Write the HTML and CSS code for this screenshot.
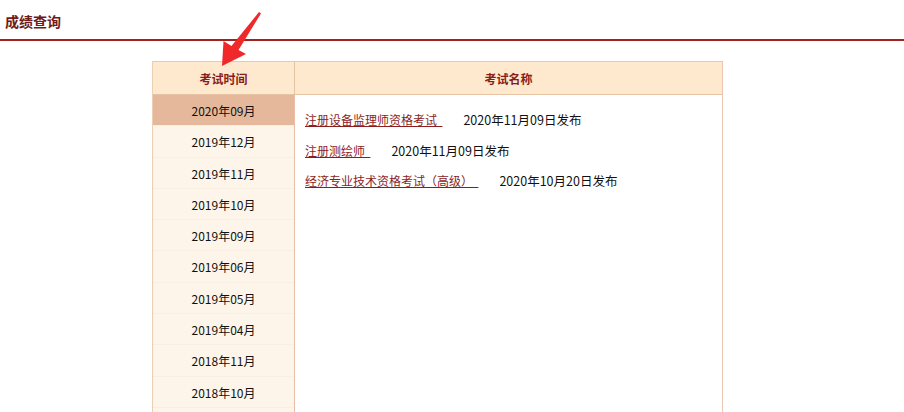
FILE: index.html
```html
<!DOCTYPE html>
<html lang="zh">
<head>
<meta charset="utf-8">
<title>成绩查询</title>
<link rel="stylesheet" href="styles.css">
</head>
<body>
<div class="topbar">
  <h1 class="title">成绩查询</h1>
</div>
<svg class="arrow" width="60" height="80" viewBox="0 0 60 80">
  <polygon points="41,7 43,8.5 20.5,45 28,49 4,61 5.5,36 13.5,41" fill="#f0282a"/>
</svg>
<div class="board">
  <div class="col-left">
    <div class="head">考试时间</div>
    <ul class="months">
      <li class="active">2020年09月</li>
      <li>2019年12月</li>
      <li>2019年11月</li>
      <li>2019年10月</li>
      <li>2019年09月</li>
      <li>2019年06月</li>
      <li>2019年05月</li>
      <li>2019年04月</li>
      <li>2018年11月</li>
      <li>2018年10月</li>
    </ul>
  </div>
  <div class="col-right">
    <div class="head">考试名称</div>
    <ul class="exams">
      <li><a href="#">注册设备监理师资格考试&nbsp;&nbsp;</a><span class="date">2020年11月09日发布</span></li>
      <li><a href="#">注册测绘师&nbsp;&nbsp;</a><span class="date">2020年11月09日发布</span></li>
      <li><a href="#">经济专业技术资格考试（高级）&nbsp;&nbsp;</a><span class="date">2020年10月20日发布</span></li>
    </ul>
  </div>
</div>
</body>
</html>
```
FILE: styles.css
```css
html, body {
  margin: 0;
  padding: 0;
  background: #ffffff;
  font-family: "Noto Sans CJK SC", "Noto Sans", sans-serif;
  font-size: 12px;
  color: #111;
  height: 412px;
  overflow: hidden;
}
.topbar {
  height: 41px;
  border-bottom: 2px solid #a3221f;
  display: flex;
  align-items: center;
  padding-left: 5px;
  box-sizing: border-box;
}
.title {
  margin: 0;
  font-size: 14px;
  font-weight: bold;
  color: #6e1a1a;
  line-height: 1;
  transform: translateY(1px);
}
.arrow {
  position: absolute;
  left: 218px;
  top: 5px;
}
.board {
  display: flex;
  margin-left: 152px;
  margin-top: 20px;
  width: 571px;
  height: 360px;
}
.head {
  height: 32px;
  background: #fee9cf;
  border-top: 1px solid #e9cba9;
  border-bottom: 1px solid #e6c3a2;
  display: flex;
  align-items: center;
  justify-content: center;
  font-weight: bold;
  color: #8a1d1a;
  font-size: 12px;
}
.col-left {
  width: 141px;
  border-left: 1px solid #ebcfb2;
  border-right: 1px solid #e9bfa7;
  background: #fdf5ea;
}
.col-left .head {
  border-right: 1px solid #e6c3a2;
  margin-right: -1px;
}
.months {
  list-style: none;
  margin: 0;
  padding: 0;
}
.months li {
  box-sizing: border-box;
  height: 31.3px;
  line-height: 31px;
  text-align: center;
  border-bottom: 1px solid #f8eee2;
  font-size: 12px;
  color: #111;
}
.months li.active {
  background: #e5b89b;
}
.col-right {
  flex: 1;
  border-right: 1px solid #ebc6b3;
  background: #fff;
}
.col-right .head {
  border-right: 0;
}
.exams {
  list-style: none;
  margin: 0;
  padding: 15px 0 0 10px;
}
.exams li {
  height: 30.5px;
  line-height: 20px;
  display: flex;
  align-items: baseline;
  font-size: 12px;
}
.exams a {
  color: #8b1d1d;
  text-decoration: underline;
  margin-right: 21px;
}
.exams .date {
  color: #111;
  font-size: 12.5px;
}
```
